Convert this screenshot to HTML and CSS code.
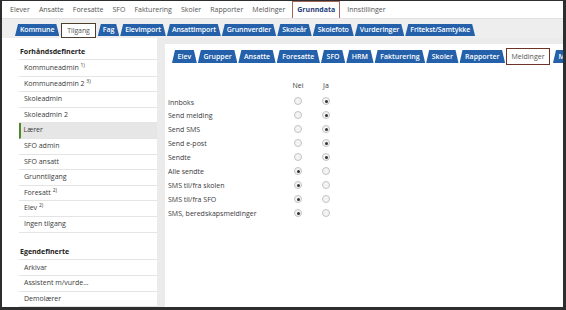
FILE: index.html
```html
<!DOCTYPE html>
<html lang="no">
<head>
    <meta charset="UTF-8">
    <title>Grunndata - Tilgang</title>
    <link rel="stylesheet" href="styles.css">
</head>
<body>
    <div class="frame">
        <nav class="topnav">
            <a>Elever</a>
            <a>Ansatte</a>
            <a>Foresatte</a>
            <a>SFO</a>
            <a>Fakturering</a>
            <a>Skoler</a>
            <a>Rapporter</a>
            <a>Meldinger</a>
            <a class="current">Grunndata</a>
            <a>Innstillinger</a>
        </nav>
        <div class="tabbar">
            <span class="tab">Kommune</span>
            <span class="tab active">Tilgang</span>
            <span class="tab">Fag</span>
            <span class="tab">Elevimport</span>
            <span class="tab">Ansattimport</span>
            <span class="tab">Grunnverdier</span>
            <span class="tab">Skoleår</span>
            <span class="tab">Skolefoto</span>
            <span class="tab">Vurderinger</span>
            <span class="tab">Fritekst/Samtykke</span>
        </div>
        <div class="main">
            <aside class="sidebar">
                <div class="group-title">Forhåndsdefinerte</div>
                <ul class="role-list">
                    <li>Kommuneadmin <sup>1)</sup></li>
                    <li>Kommuneadmin 2 <sup>3)</sup></li>
                    <li>Skoleadmin</li>
                    <li>Skoleadmin 2</li>
                    <li class="selected">Lærer</li>
                    <li>SFO admin</li>
                    <li>SFO ansatt</li>
                    <li>Grunntilgang</li>
                    <li>Foresatt <sup>2)</sup></li>
                    <li>Elev <sup>2)</sup></li>
                    <li>Ingen tilgang</li>
                </ul>
                <div class="group-title second">Egendefinerte</div>
                <ul class="role-list">
                    <li>Arkivar</li>
                    <li>Assistent m/vurde...</li>
                    <li>Demolærer</li>
                    <li>Faglærer</li>
                </ul>
            </aside>
            <section class="content">
                <div class="tabbar inner">
                    <span class="tab">Elev</span>
                    <span class="tab">Grupper</span>
                    <span class="tab">Ansatte</span>
                    <span class="tab">Foresatte</span>
                    <span class="tab">SFO</span>
                    <span class="tab">HRM</span>
                    <span class="tab">Fakturering</span>
                    <span class="tab">Skoler</span>
                    <span class="tab">Rapporter</span>
                    <span class="tab active">Meldinger</span>
                    <span class="tab">Mer</span>
                </div>
                <div class="perm" id="perm">
                    <span></span><span class="col-head">Nei</span><span class="col-head">Ja</span>
                </div>
            </section>
        </div>
    </div>
    <script>
        let rows = [
            ["Innboks", true],
            ["Send melding", true],
            ["Send SMS", true],
            ["Send e-post", true],
            ["Sendte", true],
            ["Alle sendte", false],
            ["SMS til/fra skolen", false],
            ["SMS til/fra SFO", false],
            ["SMS, beredskapsmeldinger", false]
        ];
        let perm = document.getElementById("perm");
        rows.forEach(function (r) {
            perm.insertAdjacentHTML("beforeend",
                `<span class="label">${r[0]}</span>` +
                `<span class="cell"><i class="radio${r[1] ? "" : " on"}"></i></span>` +
                `<span class="cell"><i class="radio${r[1] ? " on" : ""}"></i></span>`);
        });
    </script>
</body>
</html>
```

FILE: styles.css
```css
body {
    margin: 0;
    font-family: "Open Sans", Arial, sans-serif;
    font-size: 7px;
    color: #3a3a3a;
}
.frame {
    width: 566px;
    height: 310px;
    box-sizing: border-box;
    border-style: solid;
    border-color: #2e2e2e;
    border-width: 1px 3px 3px 2px;
    display: flex;
    flex-direction: column;
    overflow: hidden;
    background: #fff;
}
.topnav {
    height: 17px;
    display: flex;
    align-items: center;
    gap: 9px;
    padding-left: 8px;
    flex-shrink: 0;
}
.topnav a {
    color: #555;
    line-height: 14px;
}
.topnav a.current {
    font-weight: bold;
    color: #24407a;
    padding: 1px 4px;
    margin: 0 -2px;
    border: 1.5px solid #a4675a;
}
.tabbar {
    height: 20px;
    background: #eeeeee;
    display: flex;
    align-items: flex-end;
    padding: 0 0 2px 13px;
    box-sizing: border-box;
    flex-shrink: 0;
    border-top: 1px solid #e2e2e2;
}
.tab {
    height: 12px;
    line-height: 12px;
    padding: 0 5px;
    margin-right: 1px;
    background: #2461aa;
    color: #fff;
    font-weight: 600;
    letter-spacing: -0.1px;
    white-space: nowrap;
    clip-path: polygon(3px 0, calc(100% - 3px) 0, 100% 100%, 0 100%);
}
.tab.active {
    clip-path: none;
    background: #fff;
    color: #555;
    font-weight: normal;
    height: 13px;
    line-height: 13px;
    border: 1.5px solid #4d3f2c;
    margin: 0 2px 0 1px;
    position: relative;
    top: 2px;
}
.main {
    flex: 1;
    display: flex;
    background: #ebebeb;
    min-height: 0;
}
.sidebar {
    width: 155px;
    background: #fff;
    padding-left: 17px;
    box-sizing: border-box;
    flex-shrink: 0;
}
.group-title {
    font-weight: bold;
    color: #222;
    line-height: 14px;
    padding: 7px 0 0 1px;
    border-bottom: 1px solid #e4e4e4;
}
.group-title.second {
    margin-top: 5px;
}
.role-list {
    list-style: none;
    margin: 0;
    padding: 0;
}
.role-list li {
    height: 14.6px;
    line-height: 14.6px;
    padding-left: 5px;
    border-bottom: 1px solid #e4e4e4;
}
.role-list li:first-child {
    padding-top: 1px;
}
.role-list li.selected {
    background: #e6e6e6;
    border-left: 2.5px solid #4a8a2a;
    padding-left: 2.5px;
}
.role-list sup {
    font-size: 5px;
    line-height: 0;
    vertical-align: 3px;
}
.content {
    flex: 1;
    background: #fff;
    margin: 6px 0 0 8px;
    overflow: hidden;
}
.tabbar.inner {
    background: #fff;
    height: 19px;
    padding: 0 0 0 7px;
    border-top: none;
}
.tabbar.inner .tab {
    height: 13px;
    line-height: 13px;
    padding: 0 5.6px;
    letter-spacing: 0;
}
.tabbar.inner .tab.active {
    height: 15px;
    line-height: 15px;
    padding: 0 4.5px;
    border-color: #6e3324;
    top: 2px;
    margin: 0 3px 0 0;
}
.perm {
    display: grid;
    grid-template-columns: 116px 28px 28px;
    grid-auto-rows: 14px;
    align-items: center;
    margin: 17px 0 0 3px;
}
.col-head {
    text-align: center;
    margin-bottom: 3px;
}
.perm .label:nth-child(4) {
    margin-top: 3px;
}
.cell {
    display: flex;
    justify-content: center;
}
.radio {
    width: 6px;
    height: 6px;
    border-radius: 50%;
    border: 1px solid #c4c4c4;
    background: #f3f3f3;
    display: flex;
    align-items: center;
    justify-content: center;
}
.radio.on::after {
    content: "";
    width: 3px;
    height: 3px;
    border-radius: 50%;
    background: #333;
}
```
